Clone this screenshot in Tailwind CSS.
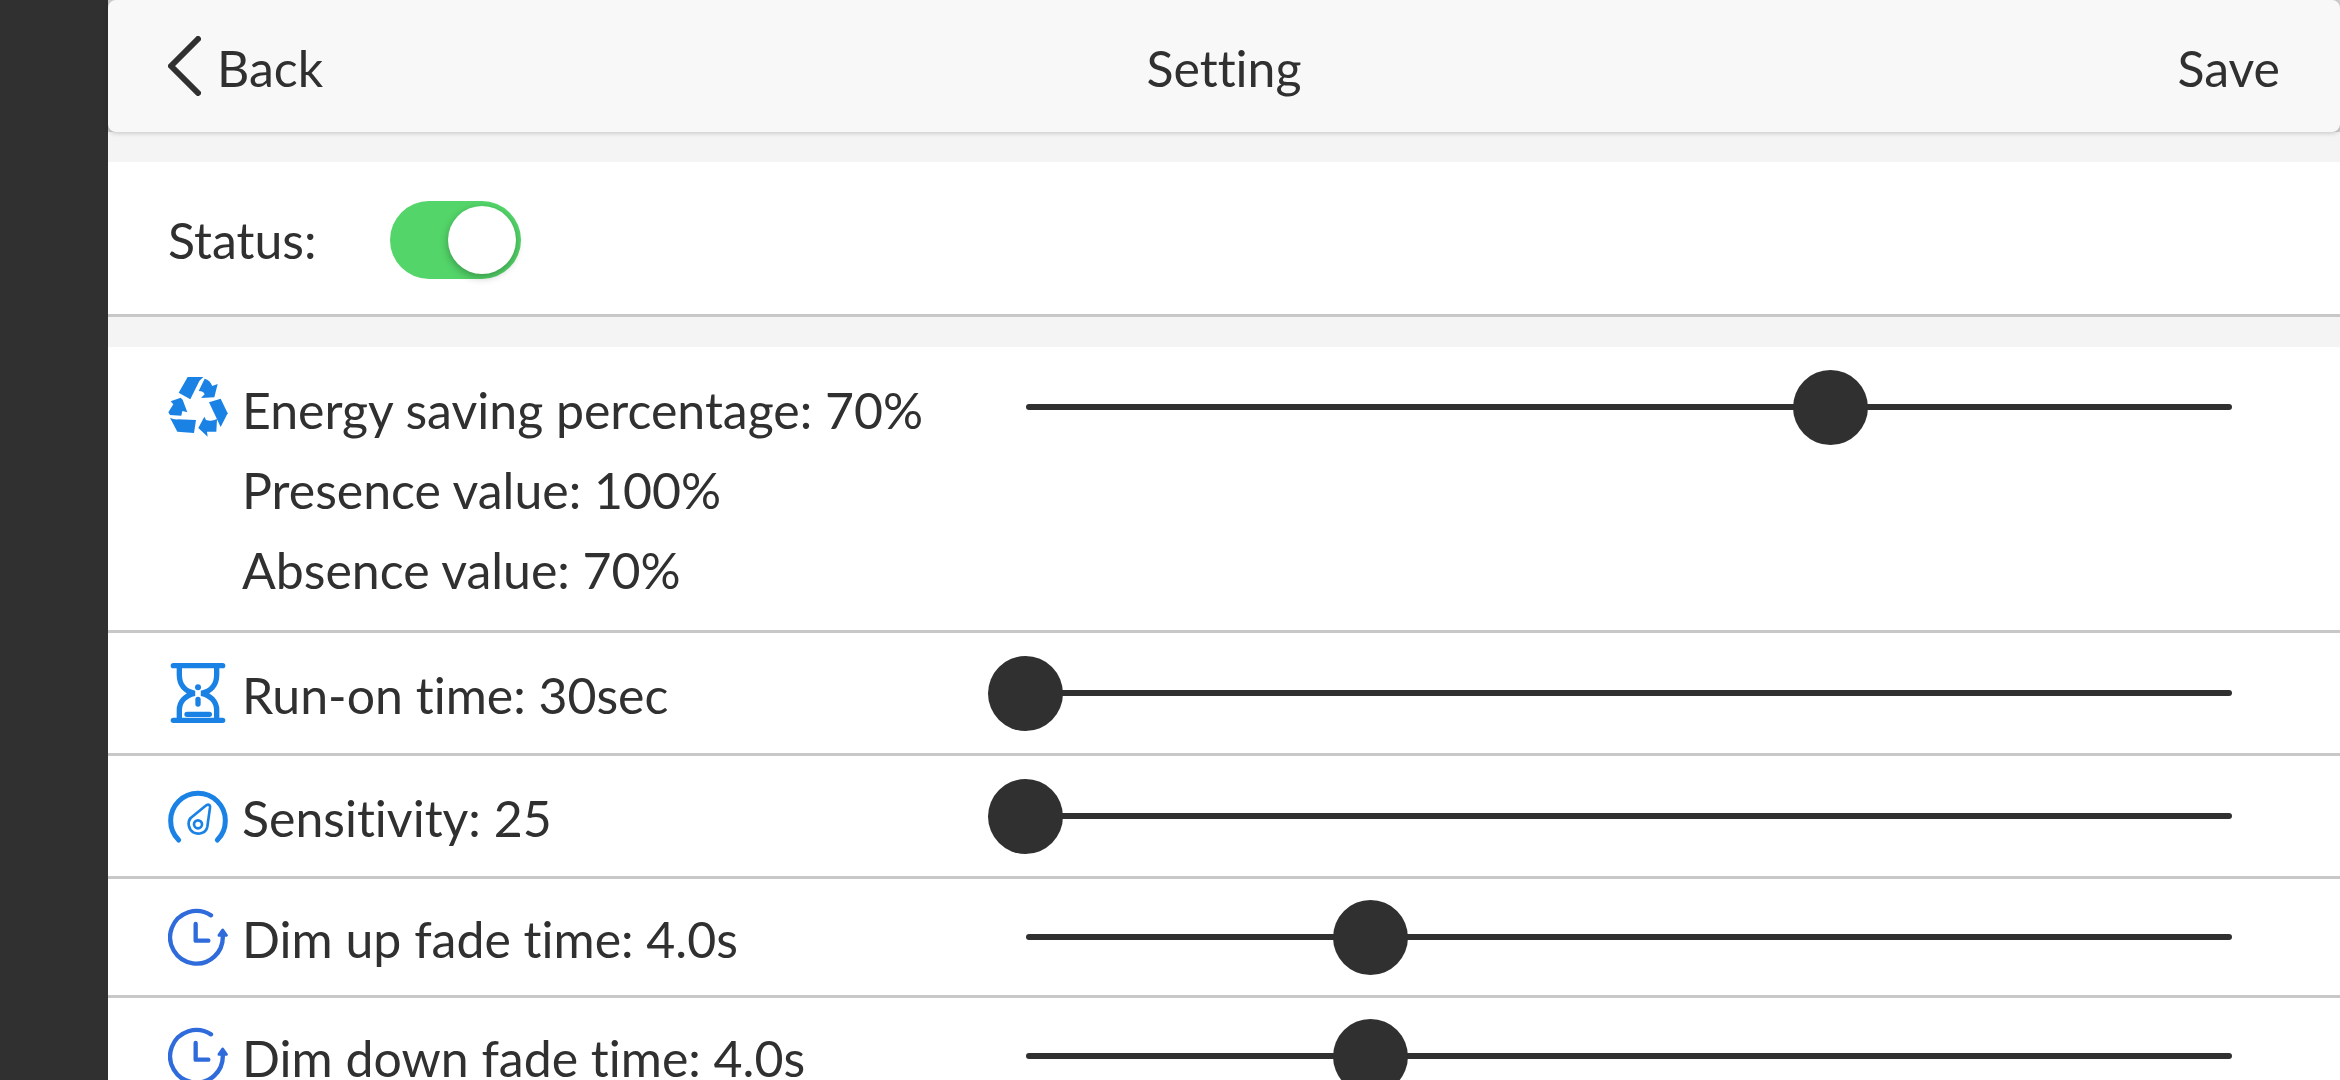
<!DOCTYPE html>
<html lang="en">
<head>
  <meta charset="UTF-8" />
  <meta name="viewport" content="width=device-width, initial-scale=1.0" />
  <title>Setting</title>
  <script src="https://cdn.jsdelivr.net/npm/@tailwindcss/browser@4"></script>
</head>
<body class="flex h-screen overflow-hidden bg-[#303030] font-['Lato','Noto_Sans',sans-serif] [font-variant-ligatures:none] text-[50px] text-[#303030]">

  <!-- Camera cutout area -->
  <div class="w-27 shrink-0"></div>

  <div class="flex min-w-0 flex-1 flex-col bg-[#f4f4f4]">

    <!-- Top bar -->
    <div class="z-10 bg-[linear-gradient(#d0d0d0,#d0d0d0)] bg-size-[100%_132px] bg-no-repeat">
      <header class="grid h-33 grid-cols-3 items-center rounded-lg bg-[#f8f8f8] px-15 shadow-[0_1px_5px_rgba(0,0,0,0.2)]">
        <button type="button" class="flex items-center gap-4 justify-self-start">
          <svg class="h-15 w-[33px]" viewBox="234 107 99 180" fill="none" stroke="#303030" stroke-width="18" stroke-linecap="round" stroke-linejoin="round">
            <path d="M324 116L243 197L324 278" />
          </svg>
          <span class="pt-1">Back</span>
        </button>
        <h1 class="justify-self-center pt-1">Setting</h1>
        <button type="button" class="justify-self-end pt-1">Save</button>
      </header>
    </div>

    <main class="flex-1 overflow-y-auto pt-[30px] [scrollbar-width:none]">

      <!-- Status -->
      <section class="mb-[30px] flex h-[155px] items-center gap-[74px] border-b-3 border-[#c8c8c8] bg-white px-15 pt-1">
        <label for="status">Status:</label>
        <input id="status" type="checkbox" role="switch" checked class="flex h-[78px] w-[131px] appearance-none items-center rounded-full bg-gray-300 px-[5px] before:size-[68px] before:rounded-full before:bg-white before:shadow-[0_3px_8px_rgba(0,0,0,0.3)] checked:justify-end checked:bg-[#53d569]" />
      </section>

      <!-- Energy saving -->
      <section class="grid grid-cols-[39fr_61fr] items-start border-b-3 border-[#c8c8c8] bg-white py-5 pr-[70px] pl-15">
        <div class="flex items-start gap-[14px]">
          <svg class="my-[10px] size-15 shrink-0" viewBox="54 51 180 180" fill="#1b82e5">
            <path d="M113 51H160L148 63L121 118L86 98Z" />
            <path d="M164 56Q180 60 187 78L203 72L193 112L153 114L164 103Q160 93 146 93Z" />
            <path d="M177 127L212 116L233 160L212 201Z" />
            <path d="M201 177L199 215H171L173 230L145 204L163 170L168 180Q185 185 201 177Z" />
            <path d="M60 173Q70 179 84 178L138 180L132 219L82 215Z" />
            <path d="M62 124L92 113L98 119L112 157L97 153L94 167L60 165L55 157L70 133Z" />
          </svg>
          <div class="pt-[3px] leading-[80px]">
            <label for="energy" class="block">Energy saving percentage: 70%</label>
            <p>Presence value: 100%</p>
            <p>Absence value: 70%</p>
          </div>
        </div>
        <div class="relative flex h-20 items-center before:absolute before:inset-x-[38px] before:h-[6px] before:rounded-full before:bg-[#303030]">
          <input id="energy" type="range" min="10" max="100" value="70" class="relative h-[75px] w-full appearance-none bg-transparent [&::-webkit-slider-thumb]:size-[75px] [&::-webkit-slider-thumb]:appearance-none [&::-webkit-slider-thumb]:rounded-full [&::-webkit-slider-thumb]:bg-[#303030]" />
        </div>
      </section>

      <!-- Run-on time -->
      <section class="grid grid-cols-[39fr_61fr] items-center border-b-3 border-[#c8c8c8] bg-white py-5 pr-[70px] pl-15">
        <div class="flex items-center gap-[14px]">
          <svg class="size-15 shrink-0" viewBox="54 39 180 180" fill="none" stroke="#1b82e5" stroke-width="16" stroke-linecap="round">
            <path d="M70 47H218M70 211H218" />
            <path d="M88 47V75C88 105 106 124 134 130C106 136 88 155 88 180V211" />
            <path d="M200 47V75C200 105 182 124 154 130C182 136 200 155 200 180V211" />
            <path d="M144 148V162M111 193H178" />
            <circle cx="144" cy="112" r="9" fill="#1b82e5" stroke="none" />
          </svg>
          <label for="runon" class="pt-1">Run-on time: 30sec</label>
        </div>
        <div class="relative flex h-20 items-center before:absolute before:inset-x-[38px] before:h-[6px] before:rounded-full before:bg-[#303030]">
          <input id="runon" type="range" min="30" max="3600" value="30" class="relative h-[75px] w-full appearance-none bg-transparent [&::-webkit-slider-thumb]:size-[75px] [&::-webkit-slider-thumb]:appearance-none [&::-webkit-slider-thumb]:rounded-full [&::-webkit-slider-thumb]:bg-[#303030]" />
        </div>
      </section>

      <!-- Sensitivity -->
      <section class="grid grid-cols-[39fr_61fr] items-center border-b-3 border-[#c8c8c8] bg-white py-5 pr-[70px] pl-15">
        <div class="flex items-center gap-[14px]">
          <svg class="size-15 shrink-0" viewBox="54 33 180 180" fill="none" stroke="#1b82e5" stroke-linecap="round" stroke-linejoin="round">
            <path stroke-width="15" d="M86 195A82 82 0 1 1 202 195" />
            <path stroke-width="8" d="M166 93C174 86 181 88 180 98L172 155C168 175 145 180 130 172C114 162 112 140 122 129Z" />
            <circle cx="144" cy="148" r="12" stroke-width="8" />
          </svg>
          <label for="sensitivity" class="pt-1">Sensitivity: 25</label>
        </div>
        <div class="relative flex h-20 items-center before:absolute before:inset-x-[38px] before:h-[6px] before:rounded-full before:bg-[#303030]">
          <input id="sensitivity" type="range" min="25" max="100" value="25" class="relative h-[75px] w-full appearance-none bg-transparent [&::-webkit-slider-thumb]:size-[75px] [&::-webkit-slider-thumb]:appearance-none [&::-webkit-slider-thumb]:rounded-full [&::-webkit-slider-thumb]:bg-[#303030]" />
        </div>
      </section>

      <!-- Dim up fade time -->
      <section class="grid grid-cols-[39fr_61fr] items-center border-b-3 border-[#c8c8c8] bg-white py-[18px] pr-[70px] pl-15">
        <div class="flex items-center gap-[14px]">
          <svg class="size-15 shrink-0" viewBox="54 36 180 180" fill="none" stroke="#2f6bdb" stroke-width="13" stroke-linecap="round" stroke-linejoin="round">
            <path d="M183 61A79 79 0 1 0 218 120" />
            <path d="M137 87V137H175" />
            <path d="M218 105L229 121H207Z" fill="#2f6bdb" stroke-width="9" />
          </svg>
          <label for="dimup" class="pt-1">Dim up fade time: 4.0s</label>
        </div>
        <div class="relative flex h-20 items-center before:absolute before:inset-x-[38px] before:h-[6px] before:rounded-full before:bg-[#303030]">
          <input id="dimup" type="range" min="0" max="14" step="0.5" value="4" class="relative h-[75px] w-full appearance-none bg-transparent [&::-webkit-slider-thumb]:size-[75px] [&::-webkit-slider-thumb]:appearance-none [&::-webkit-slider-thumb]:rounded-full [&::-webkit-slider-thumb]:bg-[#303030]" />
        </div>
      </section>

      <!-- Dim down fade time -->
      <section class="grid grid-cols-[39fr_61fr] items-center border-b-3 border-[#c8c8c8] bg-white py-[18px] pr-[70px] pl-15">
        <div class="flex items-center gap-[14px]">
          <svg class="size-15 shrink-0" viewBox="54 36 180 180" fill="none" stroke="#2f6bdb" stroke-width="13" stroke-linecap="round" stroke-linejoin="round">
            <path d="M183 61A79 79 0 1 0 218 120" />
            <path d="M137 87V137H175" />
            <path d="M218 105L229 121H207Z" fill="#2f6bdb" stroke-width="9" />
          </svg>
          <label for="dimdown" class="pt-1">Dim down fade time: 4.0s</label>
        </div>
        <div class="relative flex h-20 items-center before:absolute before:inset-x-[38px] before:h-[6px] before:rounded-full before:bg-[#303030]">
          <input id="dimdown" type="range" min="0" max="14" step="0.5" value="4" class="relative h-[75px] w-full appearance-none bg-transparent [&::-webkit-slider-thumb]:size-[75px] [&::-webkit-slider-thumb]:appearance-none [&::-webkit-slider-thumb]:rounded-full [&::-webkit-slider-thumb]:bg-[#303030]" />
        </div>
      </section>

    </main>
  </div>

  <script>
    // keep the numbers in the labels in step with the sliders
    const texts = {
      energy: v => `Energy saving percentage: ${v}%`,
      runon: v => `Run-on time: ${v}sec`,
      sensitivity: v => `Sensitivity: ${v}`,
      dimup: v => `Dim up fade time: ${Number(v).toFixed(1)}s`,
      dimdown: v => `Dim down fade time: ${Number(v).toFixed(1)}s`,
    };

    Object.keys(texts).forEach(id => {
      const input = document.getElementById(id);
      const label = document.querySelector(`label[for="${id}"]`);
      input.addEventListener("input", () => {
        label.textContent = texts[id](input.value);
      });
    });
  </script>
</body>
</html>
